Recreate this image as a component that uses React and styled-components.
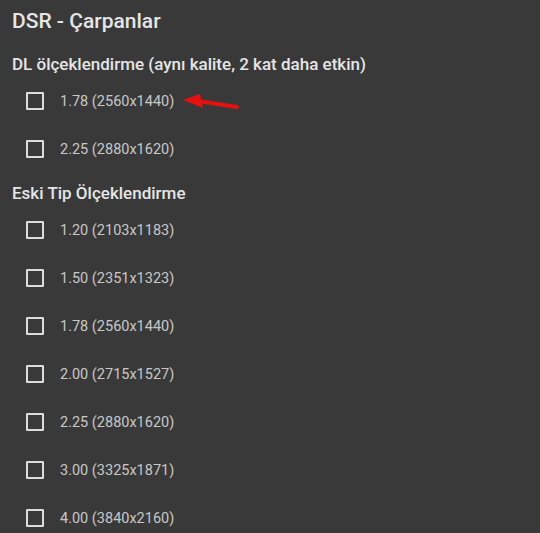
import React from "react"
import styled, { createGlobalStyle } from "styled-components"

const Global = createGlobalStyle`
html, body {
  margin: 0;
  padding: 0;
  background: #393939;
}
body {
  font-family: Roboto, "Open Sans", Arial, sans-serif;
}
`

const Page = styled.div`
width: 540px;
height: 533px;
overflow: hidden;
background: #393939;
padding: 8px 12px 0 12px;
box-sizing: border-box;
`

const Title = styled.h1`
margin: 0;
font-size: 21px;
line-height: 26px;
font-weight: 500;
color: #e6e6e6;
`

const Heading = styled.h2`
margin: ${p => p.$top}px 0 0 0;
font-size: 17px;
line-height: 20px;
font-weight: 500;
color: #e6e6e6;
`

const List = styled.div`
display: flex;
flex-direction: column;
margin-top: 3px;
`

const Row = styled.label`
display: flex;
align-items: center;
gap: 16px;
height: 48px;
padding-left: 14px;
position: relative;
`

const Box = styled.span`
width: 18px;
height: 18px;
box-sizing: border-box;
border: 2px solid #dcdcdc;
border-radius: 1px;
`

const Text = styled.span`
font-size: 14.5px;
color: #c8c8c8;
`

const Arrow = styled.svg`
position: absolute;
left: 168px;
top: 13px;
`

const dl = ["1.78 (2560x1440)", "2.25 (2880x1620)"]
const legacy = [
  "1.20 (2103x1183)",
  "1.50 (2351x1323)",
  "1.78 (2560x1440)",
  "2.00 (2715x1527)",
  "2.25 (2880x1620)",
  "3.00 (3325x1871)",
  "4.00 (3840x2160)",
]

function Option({ label, arrow }) {
  return (
    <Row>
      <Box />
      <Text>{label}</Text>
      {arrow && (
        <Arrow width="64" height="24" viewBox="0 0 64 24">
          <path d="M18 11 L57 17" stroke="#e81010" strokeWidth="4" strokeLinecap="round" />
          <path d="M3 10 L20 4 L23 18 Z" fill="#e81010" />
        </Arrow>
      )}
    </Row>
  )
}

export default function App() {
  return (
    <Page>
      <Global />
      <Title>DSR - Çarpanlar</Title>
      <Heading $top={20}>DL ölçeklendirme (aynı kalite, 2 kat daha etkin)</Heading>
      <List>
        {dl.map((l, i) => <Option key={l} label={l} arrow={i === 0} />)}
      </List>
      <Heading $top={10}>Eski Tip Ölçeklendirme</Heading>
      <List>
        {legacy.map(l => <Option key={l} label={l} />)}
      </List>
    </Page>
  )
}
